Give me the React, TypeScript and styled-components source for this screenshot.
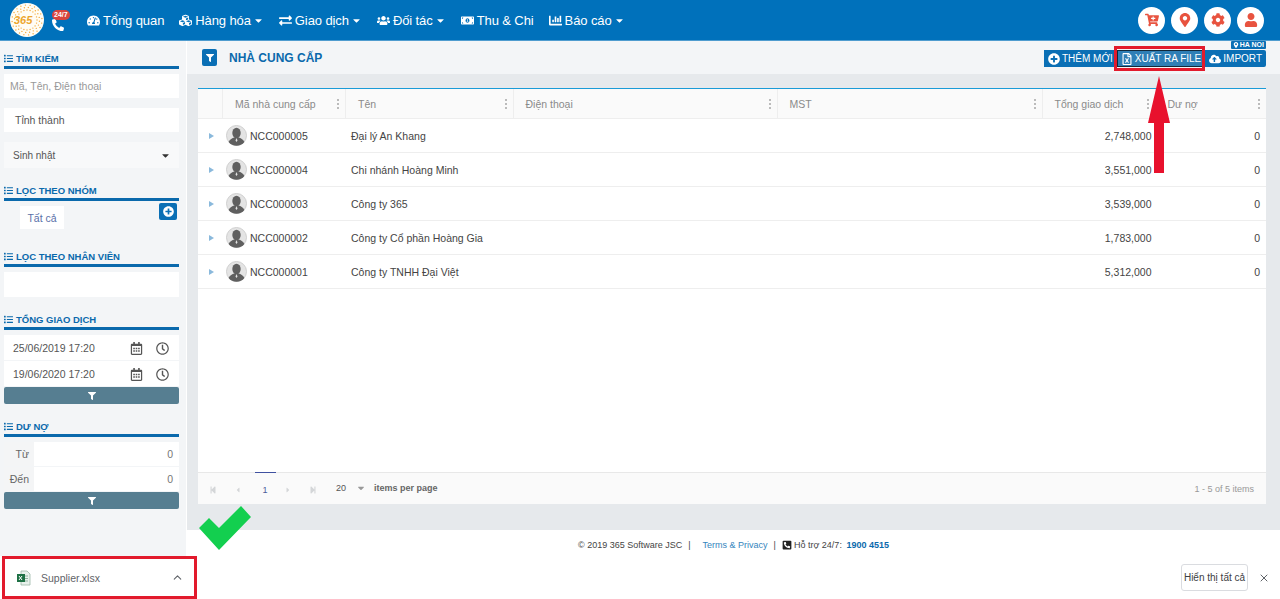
import { ReactElement, ReactNode } from 'react';
import styled, { createGlobalStyle } from 'styled-components';
import {
  FaCaretDown,
  FaCartPlus,
  FaChartBar,
  FaCloudUploadAlt,
  FaCog,
  FaCubes,
  FaExchangeAlt,
  FaFilter,
  FaList,
  FaMapMarkerAlt,
  FaMoneyBillAlt,
  FaPhoneAlt,
  FaPhoneSquareAlt,
  FaPlusCircle,
  FaRegCalendarAlt,
  FaRegClock,
  FaRegFileExcel,
  FaStepBackward,
  FaStepForward,
  FaCaretLeft,
  FaCaretRight,
  FaTachometerAlt,
  FaUser,
  FaUsers,
} from 'react-icons/fa';
import { FiChevronUp, FiX } from 'react-icons/fi';

const GlobalStyle = createGlobalStyle`
  html, body {
    margin: 0;
    padding: 0;
    width: 1280px;
    height: 599px;
    overflow: hidden;
    font-family: "Liberation Sans", Arial, sans-serif;
    color: #444;
  }
  * { box-sizing: border-box; }
`;

const Page = styled.div`
  position: relative;
  width: 1280px;
  height: 599px;
  display: flex;
  flex-direction: column;
  overflow: hidden;
  background: #fff;
`;

/* top bar */
const TopBar = styled.header`
  height: 41px;
  flex: none;
  background: #0071bb;
  border-bottom: 1px solid #4f9ccf;
  display: flex;
  align-items: center;
  padding: 0 16px 0 10px;
`;

const Logo = styled.svg`
  width: 34px;
  height: 34px;
  flex: none;
`;

const Hotline = styled.div`
  position: relative;
  width: 36px;
  margin-left: 8px;
  height: 30px;
  flex: none;
  color: #fff;
  font-size: 12px;
  padding-top: 14px;
`;

const HotBadge = styled.span`
  position: absolute;
  left: 0;
  top: 5px;
  background: #d9453d;
  color: #fff;
  font-size: 7px;
  font-weight: bold;
  line-height: 10px;
  padding: 0 2px;
  border-radius: 5px;
`;

const Nav = styled.nav`
  display: flex;
  align-items: center;
  gap: 15px;
  flex: 1;
  margin-left: -1px;
`;

const NavItem = styled.a`
  display: flex;
  align-items: center;
  color: #fff;
  font-size: 13px;
  letter-spacing: -0.1px;
  white-space: nowrap;
  gap: 2px;
  & > svg:first-child {
    font-size: 13px;
    margin-right: 1px;
  }
`;

const RoundActions = styled.div`
  display: flex;
  gap: 6px;
`;

const RoundButton = styled.button`
  width: 27px;
  height: 27px;
  border-radius: 50%;
  border: 0;
  padding: 0;
  background: #fff;
  color: #e8533f;
  font-size: 14px;
  display: flex;
  align-items: center;
  justify-content: center;
`;

/* body */
const Body = styled.div`
  flex: 1;
  min-height: 0;
  display: flex;
`;

const Sidebar = styled.aside`
  width: 186px;
  flex: none;
  background: #f3f5f7;
  padding: 10px 7px 0 4px;
  display: flex;
  flex-direction: column;
`;

const SectionTitle = styled.div`
  display: flex;
  align-items: center;
  gap: 3px;
  height: 14px;
  color: #0a69ac;
  font-size: 9.5px;
  font-weight: bold;
  padding-bottom: 0;
  border-bottom: 0;
`;

const Rule = styled.div`
  height: 3px;
  background: #0a69ac;
  margin-top: 1px;
  margin-bottom: ${({ $gap }: { $gap?: number }) => $gap ?? 5}px;
`;

const TextBox = styled.div<{ $h?: number; $mb?: number; $pad?: number; $color?: string }>`
  height: ${({ $h }) => $h ?? 25}px;
  margin-bottom: ${({ $mb }) => $mb ?? 0}px;
  padding-left: ${({ $pad }) => $pad ?? 6}px;
  background: #fff;
  color: ${({ $color }) => $color ?? '#555'};
  font-size: 10.5px;
  display: flex;
  align-items: center;
`;

const SelectBox = styled(TextBox)`
  background: #f8f9fa;
  justify-content: space-between;
  padding-right: 8px;
  font-size: 10px;
`;

const GroupRow = styled.div`
  position: relative;
  height: 28px;
  margin-bottom: 15px;
  padding-left: 16px;
`;

const GroupItem = styled.div`
  width: 44px;
  height: 23px;
  background: #fff;
  color: #5a6fa8;
  font-size: 10.5px;
  display: flex;
  align-items: center;
  justify-content: center;
`;

const AddGroup = styled.button`
  position: absolute;
  right: 2px;
  top: -3px;
  width: 18px;
  height: 17px;
  border: 0;
  padding: 0;
  border-radius: 2px;
  background: #0a6fb5;
  color: #fff;
  font-size: 11px;
  display: flex;
  align-items: center;
  justify-content: center;
`;

const DateRow = styled.div`
  height: 25px;
  margin-bottom: 1px;
  background: #fff;
  display: flex;
  align-items: center;
  color: #555;
  font-size: 10.5px;
  padding-left: 9px;
`;

const DateText = styled.span`
  flex: 1;
`;

const DateIcon = styled.span`
  width: 18px;
  margin-right: 8px;
  height: 100%;
  display: flex;
  align-items: center;
  justify-content: center;
  color: #555;
  font-size: 13px;
  padding-top: 2px;
`;

const FilterButton = styled.button<{ $mb: number }>`
  height: 17px;
  flex: none;
  border: 0;
  padding: 0;
  border-radius: 2px;
  background: #567e91;
  color: #fff;
  font-size: 8px;
  margin-bottom: ${({ $mb }) => $mb}px;
  display: flex;
  align-items: center;
  justify-content: center;
`;

const RangeRow = styled.div`
  height: 24px;
  margin-bottom: 1px;
  display: grid;
  grid-template-columns: 30px 1fr;
  font-size: 10.5px;
  color: #666;
`;

const RangeLabel = styled.div`
  background: #f4f5f6;
  display: flex;
  align-items: center;
  justify-content: flex-end;
  padding-right: 5px;
`;

const RangeValue = styled.div`
  background: #fff;
  display: flex;
  align-items: center;
  justify-content: flex-end;
  padding-right: 6px;
  color: #777;
`;

/* main */
const Main = styled.main`
  flex: 1;
  min-width: 0;
  background: #e6e9ec;
  display: flex;
  flex-direction: column;
  border-left: 1px solid #fff;
`;

const TitleBar = styled.div`
  height: 33px;
  flex: none;
  background: #f3f5f7;
  display: flex;
  align-items: center;
  padding: 0 14px 0 15px;
`;

const TitleIcon = styled.div`
  width: 15px;
  height: 17px;
  border-radius: 2px;
  background: #0a6fb5;
  color: #fff;
  font-size: 8px;
  display: flex;
  align-items: center;
  justify-content: center;
`;

const Title = styled.h1`
  flex: 1;
  margin: 0 0 0 12px;
  color: #0a69ac;
  font-size: 12px;
  font-weight: bold;
`;

const ActionGroup = styled.div`
  position: relative;
  display: flex;
  height: 17px;
  margin-top: 2px;
`;

const ActionButton = styled.button<{ $active?: boolean }>`
  height: 17px;
  border: 0;
  padding: 0 4px;
  display: flex;
  align-items: center;
  gap: 2px;
  color: #fff;
  font-family: inherit;
  font-size: 10px;
  white-space: nowrap;
  background: ${({ $active }) => ($active ? '#2f7fb6' : '#0a6fb5')};
  box-shadow: ${({ $active }) => ($active ? 'inset 0 0 0 1px #13293a' : 'none')};
  &:first-child {
    border-radius: 2px 0 0 2px;
  }
  &:last-child {
    border-radius: 0 2px 2px 0;
  }
  & > svg {
    font-size: 12px;
  }
`;

const BranchTag = styled.span`
  position: absolute;
  right: 0;
  top: -9px;
  height: 8px;
  padding: 0 2px;
  background: #0a6fb5;
  color: #fff;
  font-size: 7px;
  font-weight: bold;
  line-height: 8px;
  display: flex;
  align-items: center;
  gap: 1px;
  border-radius: 1px;
`;

const Content = styled.div`
  flex: 1;
  min-height: 0;
  padding: 14px 14px 26px 11px;
  display: flex;
`;

const Grid = styled.section`
  flex: 1;
  min-width: 0;
  background: #fff;
  border-top: 1px solid #1a9bd7;
  display: flex;
  flex-direction: column;
`;

const columns = '24px 123px 167.5px 264px 265px 113px 1fr';

const HeadRow = styled.div`
  height: 30px;
  flex: none;
  display: grid;
  grid-template-columns: ${columns};
  background: #fafafa;
  border-bottom: 1px solid #eee;
`;

const HeadCell = styled.div<{ $flush?: boolean }>`
  display: flex;
  align-items: center;
  justify-content: space-between;
  padding: 0 6px 0 12px;
  color: #8a8a8a;
  font-size: 10.5px;
  border-left: ${({ $flush }) => ($flush ? '0' : '1px solid #eee')};
  min-width: 0;
`;

const Dots = styled.span`
  display: flex;
  flex-direction: column;
  gap: 2px;
  & > i {
    width: 2px;
    height: 2px;
    background: #bbb;
    display: block;
  }
`;

const Rows = styled.div`
  flex: 1;
  min-height: 0;
`;

const Row = styled.div`
  height: 34px;
  display: grid;
  grid-template-columns: ${columns};
  border-bottom: 1px solid #eee;
  align-items: center;
  color: #444;
  font-size: 10.5px;
`;

const Expand = styled.span`
  width: 0;
  height: 0;
  margin-left: 11px;
  border-left: 5px solid #8ab9dc;
  border-top: 3px solid transparent;
  border-bottom: 3px solid transparent;
`;

const CodeCell = styled.div`
  display: flex;
  align-items: center;
  gap: 3px;
  padding-left: 4px;
`;

const Avatar = styled.svg`
  width: 21px;
  height: 21px;
  flex: none;
`;

const NameCell = styled.div`
  padding-left: 6px;
`;

const AmountCell = styled.div<{ $inset: number }>`
  text-align: right;
  padding-right: ${({ $inset }) => $inset}px;
`;

const Pager = styled.div`
  height: 32px;
  flex: none;
  background: #fafafa;
  border-top: 1px solid #e8e8e8;
  display: flex;
  align-items: center;
  color: #666;
  font-size: 9px;
  padding: 0 12px 0 11px;
`;

const PagerArrow = styled.span`
  width: 25px;
  color: #d4d6d8;
  font-size: 8px;
  display: flex;
  padding-top: 3px;
`;

const PageNumber = styled.span`
  position: relative;
  width: 26px;
  margin-left: -7px;
  margin-right: 6px;
  height: 100%;
  color: #4a5a9a;
  display: flex;
  align-items: center;
  justify-content: center;
  padding-top: 3px;
  &::before {
    content: '';
    position: absolute;
    top: -1px;
    left: 3px;
    width: 21px;
    height: 1px;
    background: #3f51a0;
  }
`;

const PageSize = styled.span`
  margin-left: 2px;
  display: flex;
  align-items: center;
  gap: 10px;
  color: #555;
  padding-bottom: 1px;
  & > svg {
    color: #999;
    font-size: 10px;
  }
`;

const PerPage = styled.span`
  margin-left: 8px;
  font-weight: bold;
  color: #666;
  padding-bottom: 1px;
`;

const PagerInfo = styled.span`
  margin-left: auto;
  color: #999;
`;

const Footer = styled.footer`
  height: 26px;
  flex: none;
  background: #fff;
  display: flex;
  align-items: flex-start;
  justify-content: center;
  padding: 10px 0 0 0;
  font-size: 9px;
  color: #444;
  gap: 6px;
`;

const FooterLink = styled.span`
  color: #3585bd;
  margin-left: 6px;
`;

const Hotnum = styled.b`
  color: #0a69ac;
`;

const SupportText = styled.span`
  display: inline-flex;
  align-items: center;
  gap: 2px;
`;

/* download shelf */
const Shelf = styled.div`
  height: 43px;
  flex: none;
  background: #fff;
  display: flex;
  align-items: center;
  padding: 0 10px 0 16px;
`;

const ShelfFile = styled.div`
  width: 168px;
  display: flex;
  align-items: center;
  color: #5f6368;
  font-size: 10.5px;
`;

const ShelfName = styled.span`
  flex: 1;
  margin-left: 9px;
`;

const ShelfChevron = styled.span`
  display: flex;
  color: #5f6368;
  font-size: 13px;
`;

const ExcelIcon = styled.svg`
  width: 16px;
  height: 16px;
  flex: none;
`;

const ShowAll = styled.button`
  margin-left: auto;
  width: 67px;
  height: 27px;
  background: #fff;
  border: 1px solid #dadce0;
  border-radius: 3px;
  padding: 0;
  color: #3c4043;
  font-family: inherit;
  font-size: 10px;
`;

const CloseShelf = styled.span`
  display: flex;
  margin-left: 10px;
  color: #5f6368;
  font-size: 12px;
`;

/* annotations drawn over the screenshot */
const RedFrame = styled.div`
  position: absolute;
  border: 3px solid #e21a2c;
  pointer-events: none;
`;

const ExportFrame = styled(RedFrame)`
  left: 1114px;
  top: 46px;
  width: 91px;
  height: 25px;
`;

const ShelfFrame = styled(RedFrame)`
  left: 2px;
  top: 556px;
  width: 195px;
  height: 43px;
`;

const Annotation = styled.svg`
  position: absolute;
  pointer-events: none;
`;

const ArrowMark = styled(Annotation)`
  left: 1147px;
  top: 76px;
  width: 24px;
  height: 98px;
`;

const CheckMark = styled(Annotation)`
  left: 199px;
  top: 505px;
  width: 53px;
  height: 46px;
`;

interface SectionProps {
  title: string;
  gap?: number;
  children: ReactNode;
}

const Section = ({ title, gap, children }: SectionProps): ReactElement => (
  <>
    <SectionTitle>
      <FaList size={9} />
      {title}
    </SectionTitle>
    <Rule $gap={gap} />
    {children}
  </>
);

const suppliers = [
  { code: 'NCC000005', name: 'Đại lý An Khang', total: '2,748,000' },
  { code: 'NCC000004', name: 'Chi nhánh Hoàng Minh', total: '3,551,000' },
  { code: 'NCC000003', name: 'Công ty 365', total: '3,539,000' },
  { code: 'NCC000002', name: 'Công ty Cổ phần Hoàng Gia', total: '1,783,000' },
  { code: 'NCC000001', name: 'Công ty TNHH Đại Việt', total: '5,312,000' },
];

const headers = ['Mã nhà cung cấp', 'Tên', 'Điện thoại', 'MST', 'Tổng giao dịch', 'Dư nợ'];

const logoDots = Array.from({ length: 60 }, (_, i) => {
  const angle = (i / 60) * Math.PI * 2;
  const radius = 10 + (i % 3) * 2.5;
  return { x: 17 + Math.cos(angle) * radius, y: 17 + Math.sin(angle) * radius };
});

const SupplierAvatar = (): ReactElement => (
  <Avatar viewBox="0 0 21 21">
    <circle cx="10.5" cy="10.5" r="10" fill="#e4e4e4" stroke="#cfcfcf" />
    <ellipse cx="10.5" cy="8" rx="4.2" ry="5.2" fill="#5f5f5f" />
    <path d="M2.6 17c1-3 4-4 5.6-4.6h4.6c1.6.6 4.600 1.600 5.600 4.600a10 10 0 0 1-15.800 0z" fill="#5f5f5f" />
    <path d="M10.500 13l-1 2.500 1 1.500 1-1.500z" fill="#e4e4e4" />
  </Avatar>
);

const App = (): ReactElement => (
  <Page>
    <GlobalStyle />
    <TopBar>
      <Logo viewBox="0 0 34 34">
        <circle cx="17" cy="17" r="17" fill="#fffdf5" />
        {logoDots.map(({ x, y }) => (
          <circle key={`${x}-${y}`} cx={x} cy={y} r="0.7" fill="#f4a93c" />
        ))}
        <text x="4" y="21" fontSize="11" fontWeight="bold" fontStyle="italic" fill="#eda62d">
          365
        </text>
      </Logo>
      <Hotline>
        <HotBadge>24/7</HotBadge>
        <FaPhoneAlt />
      </Hotline>
      <Nav>
        <NavItem>
          <FaTachometerAlt />
          Tổng quan
        </NavItem>
        <NavItem>
          <FaCubes />
          Hàng hóa
          <FaCaretDown size={11} />
        </NavItem>
        <NavItem>
          <FaExchangeAlt />
          Giao dịch
          <FaCaretDown size={11} />
        </NavItem>
        <NavItem>
          <FaUsers />
          Đối tác
          <FaCaretDown size={11} />
        </NavItem>
        <NavItem>
          <FaMoneyBillAlt />
          Thu &amp; Chi
        </NavItem>
        <NavItem>
          <FaChartBar />
          Báo cáo
          <FaCaretDown size={11} />
        </NavItem>
      </Nav>
      <RoundActions>
        <RoundButton>
          <FaCartPlus />
        </RoundButton>
        <RoundButton>
          <FaMapMarkerAlt />
        </RoundButton>
        <RoundButton>
          <FaCog />
        </RoundButton>
        <RoundButton>
          <FaUser />
        </RoundButton>
      </RoundActions>
    </TopBar>

    <Body>
      <Sidebar>
        <Section title="TÌM KIẾM">
          <TextBox $h={24} $mb={10} $color="#999">
            Mã, Tên, Điện thoại
          </TextBox>
          <TextBox $h={24} $mb={10} $pad={11}>
            Tỉnh thành
          </TextBox>
          <SelectBox $h={26} $mb={15} $pad={9}>
            Sinh nhật
            <FaCaretDown size={11} color="#333" />
          </SelectBox>
        </Section>
        <Section title="LỌC THEO NHÓM">
          <GroupRow>
            <GroupItem>Tất cả</GroupItem>
            <AddGroup>
              <FaPlusCircle />
            </AddGroup>
          </GroupRow>
        </Section>
        <Section title="LỌC THEO NHÂN VIÊN">
          <TextBox $h={25} $mb={15} />
        </Section>
        <Section title="TỔNG GIAO DỊCH">
          <DateRow>
            <DateText>25/06/2019 17:20</DateText>
            <DateIcon>
              <FaRegCalendarAlt />
            </DateIcon>
            <DateIcon>
              <FaRegClock />
            </DateIcon>
          </DateRow>
          <DateRow>
            <DateText>19/06/2020 17:20</DateText>
            <DateIcon>
              <FaRegCalendarAlt />
            </DateIcon>
            <DateIcon>
              <FaRegClock />
            </DateIcon>
          </DateRow>
          <FilterButton $mb={15}>
            <FaFilter />
          </FilterButton>
        </Section>
        <Section title="DƯ NỢ">
          <RangeRow>
            <RangeLabel>Từ</RangeLabel>
            <RangeValue>0</RangeValue>
          </RangeRow>
          <RangeRow>
            <RangeLabel>Đến</RangeLabel>
            <RangeValue>0</RangeValue>
          </RangeRow>
          <FilterButton $mb={0}>
            <FaFilter />
          </FilterButton>
        </Section>
      </Sidebar>

      <Main>
        <TitleBar>
          <TitleIcon>
            <FaFilter />
          </TitleIcon>
          <Title>NHÀ CUNG CẤP</Title>
          <ActionGroup>
            <BranchTag>
              <FaMapMarkerAlt size={6} />
              HA NOI
            </BranchTag>
            <ActionButton>
              <FaPlusCircle />
              THÊM MỚI
            </ActionButton>
            <ActionButton $active>
              <FaRegFileExcel />
              XUẤT RA FILE
            </ActionButton>
            <ActionButton>
              <FaCloudUploadAlt />
              IMPORT
            </ActionButton>
          </ActionGroup>
        </TitleBar>

        <Content>
          <Grid>
            <HeadRow>
              <HeadCell $flush />
              {headers.map((header) => (
                <HeadCell key={header}>
                  {header}
                  <Dots>
                    <i />
                    <i />
                    <i />
                  </Dots>
                </HeadCell>
              ))}
            </HeadRow>
            <Rows>
              {suppliers.map((supplier) => (
                <Row key={supplier.code}>
                  <Expand />
                  <CodeCell>
                    <SupplierAvatar />
                    {supplier.code}
                  </CodeCell>
                  <NameCell>{supplier.name}</NameCell>
                  <div />
                  <div />
                  <AmountCell $inset={3}>{supplier.total}</AmountCell>
                  <AmountCell $inset={6}>0</AmountCell>
                </Row>
              ))}
            </Rows>
            <Pager>
              <PagerArrow>
                <FaStepBackward />
              </PagerArrow>
              <PagerArrow>
                <FaCaretLeft />
              </PagerArrow>
              <PageNumber>1</PageNumber>
              <PagerArrow>
                <FaCaretRight />
              </PagerArrow>
              <PagerArrow>
                <FaStepForward />
              </PagerArrow>
              <PageSize>
                20
                <FaCaretDown />
              </PageSize>
              <PerPage>items per page</PerPage>
              <PagerInfo>1 - 5 of 5 items</PagerInfo>
            </Pager>
          </Grid>
        </Content>

        <Footer>
          <span>© 2019 365 Software JSC</span>
          <span>|</span>
          <FooterLink>Terms &amp; Privacy</FooterLink>
          <span>|</span>
          <SupportText>
            <FaPhoneSquareAlt size={10} color="#222" />
            Hỗ trợ 24/7:&nbsp;
            <Hotnum>1900 4515</Hotnum>
          </SupportText>
        </Footer>
      </Main>
    </Body>

    <Shelf>
      <ShelfFile>
        <ExcelIcon viewBox="0 0 16 16">
          <path d="M5 1h6l3 3v11H5z" fill="#e8f1ec" stroke="#9cb8a8" strokeWidth="0.8" />
          <path d="M8 6h4M8 8.500h4M8 11h4" stroke="#8fb39f" strokeWidth="1" />
          <rect x="1" y="4" width="8" height="8" fill="#1e7145" />
          <path d="M3 6l3 4M6 6l-3 4" stroke="#fff" strokeWidth="1" />
        </ExcelIcon>
        <ShelfName>Supplier.xlsx</ShelfName>
        <ShelfChevron>
          <FiChevronUp />
        </ShelfChevron>
      </ShelfFile>
      <ShowAll>Hiển thị tất cả</ShowAll>
      <CloseShelf>
        <FiX />
      </CloseShelf>
    </Shelf>

    <ExportFrame />
    <ShelfFrame />
    <ArrowMark viewBox="0 0 24 98">
      <path d="M12 0L23 47H17V97H7V47H1z" fill="#e8112d" />
    </ArrowMark>
    <CheckMark viewBox="0 0 53 46">
      <path d="M0 23L10 13L20 23L42 1L52 12L20 45z" fill="#13cf4f" />
    </CheckMark>
  </Page>
);

export default App;
